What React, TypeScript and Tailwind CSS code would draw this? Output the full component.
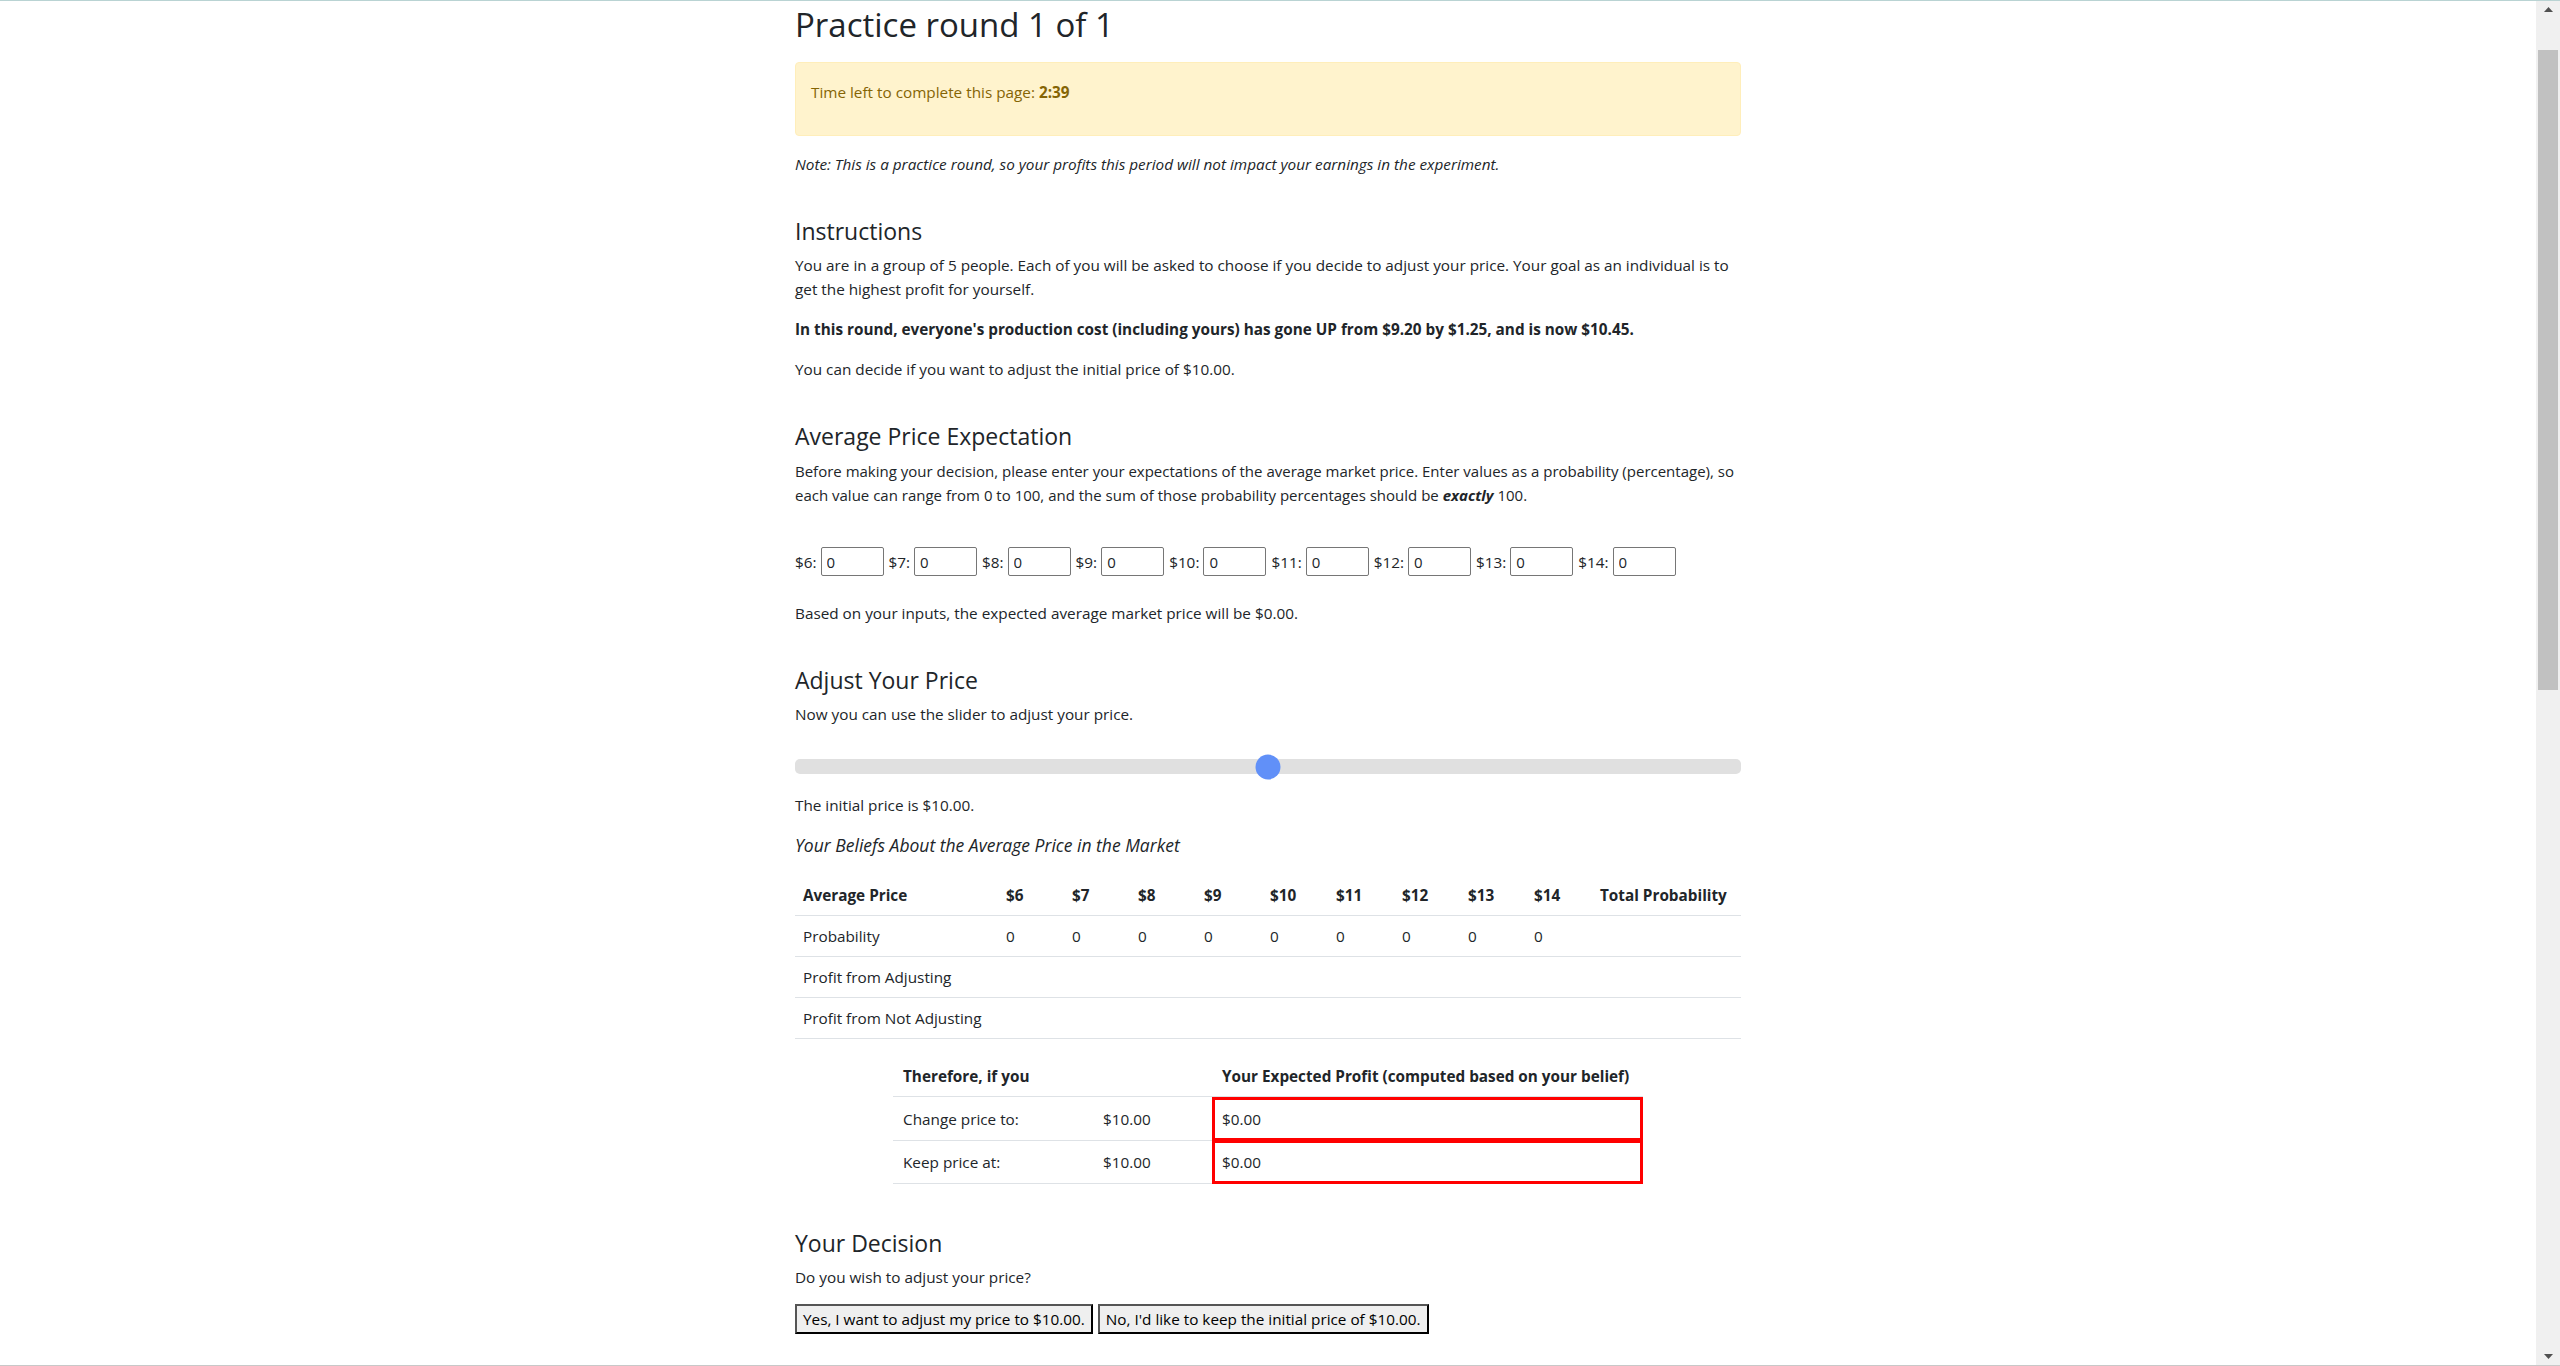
import { useState } from 'react';

const prices = [6, 7, 8, 9, 10, 11, 12, 13, 14];

function Scrollbar() {
  return (
    <div className="flex w-[24px] shrink-0 flex-col items-center bg-[#f0f0f0]">
      <div className="flex h-[17px] w-full items-center justify-center">
        <svg width="9" height="5" viewBox="0 0 9 5">
          <path d="M4.5 0L9 5H0z" fill="#505050" />
        </svg>
      </div>
      <div className="mt-[32px] h-[640px] w-[20px] bg-[#c1c1c1]" />
      <div className="flex-1" />
      <div className="flex h-[17px] w-full items-center justify-center">
        <svg width="9" height="5" viewBox="0 0 9 5">
          <path d="M0 0H9L4.5 5z" fill="#505050" />
        </svg>
      </div>
    </div>
  );
}

function App() {
  const [beliefs, setBeliefs] = useState<Record<number, string>>(
    Object.fromEntries(prices.map(p => [p, '0']))
  );

  return (
    <div className="flex h-[1366px] w-full overflow-hidden border-t border-b border-t-[#b9d3d3] border-b-[#c8c8c8] bg-white font-['Open_Sans',sans-serif] text-[#212529]">
      <main className="min-w-0 flex-1">
        <div className="mx-auto w-[946px] pt-[5px] text-[15.3px] leading-6">
          <h2 className="text-[33px] font-medium leading-[38px]">Practice round 1 of 1</h2>

          <div className="mt-[18px] rounded border border-[#ffeeba] bg-[#fff3cd] px-[15px] pt-[17px] pb-[31px] text-[#856404]">
            Time left to complete this page: <b>2:39</b>
          </div>

          <p className="mt-[16px] italic">
            Note: This is a practice round, so your profits this period will not impact your earnings in the experiment.
          </p>

          <h4 className="mt-[41px] text-[23px] font-medium leading-[28px]">Instructions</h4>
          <p className="mt-[8px]">
            You are in a group of 5 people. Each of you will be asked to choose if you decide to adjust your price. Your goal as an individual is to get the highest profit for yourself.
          </p>
          <p className="mt-[16px] font-bold">
            In this round, everyone's production cost (including yours) has gone UP from $9.20 by $1.25, and is now $10.45.
          </p>
          <p className="mt-[16px]">You can decide if you want to adjust the initial price of $10.00.</p>

          <h4 className="mt-[41px] text-[23px] font-medium leading-[28px]">Average Price Expectation</h4>
          <p className="mt-[9px] text-[15px]">
            Before making your decision, please enter your expectations of the average market price. Enter values as a probability (percentage), so each value can range from 0 to 100, and the sum of those probability percentages should be <span className="font-bold italic">exactly</span> 100.
          </p>

          <div className="mt-[40px] flex h-[29px] items-center gap-[5px]">
            {prices.map(p => (
              <label key={p} className="flex items-center gap-[4px]">
                <span>${p}:</span>
                <input
                  value={beliefs[p]}
                  onChange={e => setBeliefs(prev => ({ ...prev, [p]: e.target.value }))}
                  className="h-[29px] w-[63px] rounded-[2px] border border-[#767676] px-[5px] text-[15px] outline-none"
                />
              </label>
            ))}
          </div>

          <p className="mt-[25px]">Based on your inputs, the expected average market price will be $0.00.</p>

          <h4 className="mt-[41px] text-[23px] font-medium leading-[28px]">Adjust Your Price</h4>
          <p className="mt-[8px]">Now you can use the slider to adjust your price.</p>

          <div className="mt-[28px] flex h-[25px] items-center">
            <div className="relative h-[15px] w-full rounded-[5px] bg-[#e0e0e0]">
              <div className="absolute top-1/2 left-1/2 h-[25px] w-[25px] -translate-x-1/2 -translate-y-1/2 rounded-full bg-[#6190f8]" />
            </div>
          </div>

          <p className="mt-[14px]">The initial price is $10.00.</p>
          <p className="mt-[16px] text-[17.5px] italic">Your Beliefs About the Average Price in the Market</p>

          <table className="mt-[18px] w-full table-fixed border-separate border-spacing-0">
            <colgroup>
              <col className="w-[203px]" />
              {prices.map(p => (
                <col key={p} className="w-[66px]" />
              ))}
              <col />
            </colgroup>
            <thead>
              <tr>
                <th className="border-b border-[#dee2e6] px-2 py-2 text-left font-bold">Average Price</th>
                {prices.map(p => (
                  <th key={p} className="border-b border-[#dee2e6] px-2 py-2 text-left font-bold">${p}</th>
                ))}
                <th className="border-b border-[#dee2e6] px-2 py-2 text-left font-bold">Total Probability</th>
              </tr>
            </thead>
            <tbody>
              <tr>
                <td className="border-b border-[#dee2e6] px-2 py-2">Probability</td>
                {prices.map(p => (
                  <td key={p} className="border-b border-[#dee2e6] px-2 py-2">{beliefs[p] || 0}</td>
                ))}
                <td className="border-b border-[#dee2e6] px-2 py-2"></td>
              </tr>
              <tr>
                <td className="border-b border-[#dee2e6] px-2 py-2">Profit from Adjusting</td>
                {prices.map(p => (
                  <td key={p} className="border-b border-[#dee2e6] px-2 py-2"></td>
                ))}
                <td className="border-b border-[#dee2e6] px-2 py-2"></td>
              </tr>
              <tr>
                <td className="border-b border-[#dee2e6] px-2 py-2">Profit from Not Adjusting</td>
                {prices.map(p => (
                  <td key={p} className="border-b border-[#dee2e6] px-2 py-2"></td>
                ))}
                <td className="border-b border-[#dee2e6] px-2 py-2"></td>
              </tr>
            </tbody>
          </table>

          <table className="mx-auto mt-[17px] w-[750px] table-fixed border-separate border-spacing-0">
            <colgroup>
              <col className="w-[200px]" />
              <col className="w-[119px]" />
              <col />
            </colgroup>
            <thead>
              <tr>
                <th className="border-b border-[#dee2e6] py-2 pl-[10px] text-left font-bold">Therefore, if you</th>
                <th className="border-b border-[#dee2e6] py-2 pl-[10px]"></th>
                <th className="border-b border-[#dee2e6] py-2 pl-[10px] text-left font-bold">
                  Your Expected Profit (computed based on your belief)
                </th>
              </tr>
            </thead>
            <tbody>
              <tr>
                <td className="border-b border-[#dee2e6] pl-[10px] align-middle">Change price to:</td>
                <td className="border-b border-[#dee2e6] pl-[10px] align-middle">$10.00</td>
                <td className="border-[3px] border-[#ff0000] py-[7px] pl-[7px] align-middle">$0.00</td>
              </tr>
              <tr>
                <td className="border-b border-[#dee2e6] pl-[10px] align-middle">Keep price at:</td>
                <td className="border-b border-[#dee2e6] pl-[10px] align-middle">$10.00</td>
                <td className="border-[3px] border-t-2 border-[#ff0000] py-[7px] pl-[7px] align-middle">$0.00</td>
              </tr>
            </tbody>
          </table>

          <h4 className="mt-[45px] text-[23px] font-medium leading-[28px]">Your Decision</h4>
          <p className="mt-[8px]">Do you wish to adjust your price?</p>

          <div className="mt-[15px] flex gap-[5px]">
            <button className="h-[30px] border-2 border-t-[#555555] border-r-black border-b-black border-l-[#555555] bg-[#efefef] px-[6px] text-[15.3px] text-black">
              Yes, I want to adjust my price to $10.00.
            </button>
            <button className="h-[30px] border-2 border-t-[#555555] border-r-black border-b-black border-l-[#555555] bg-[#efefef] px-[6px] text-[15.3px] text-black">
              No, I'd like to keep the initial price of $10.00.
            </button>
          </div>
        </div>
      </main>
      <Scrollbar />
    </div>
  );
}

export default App;
